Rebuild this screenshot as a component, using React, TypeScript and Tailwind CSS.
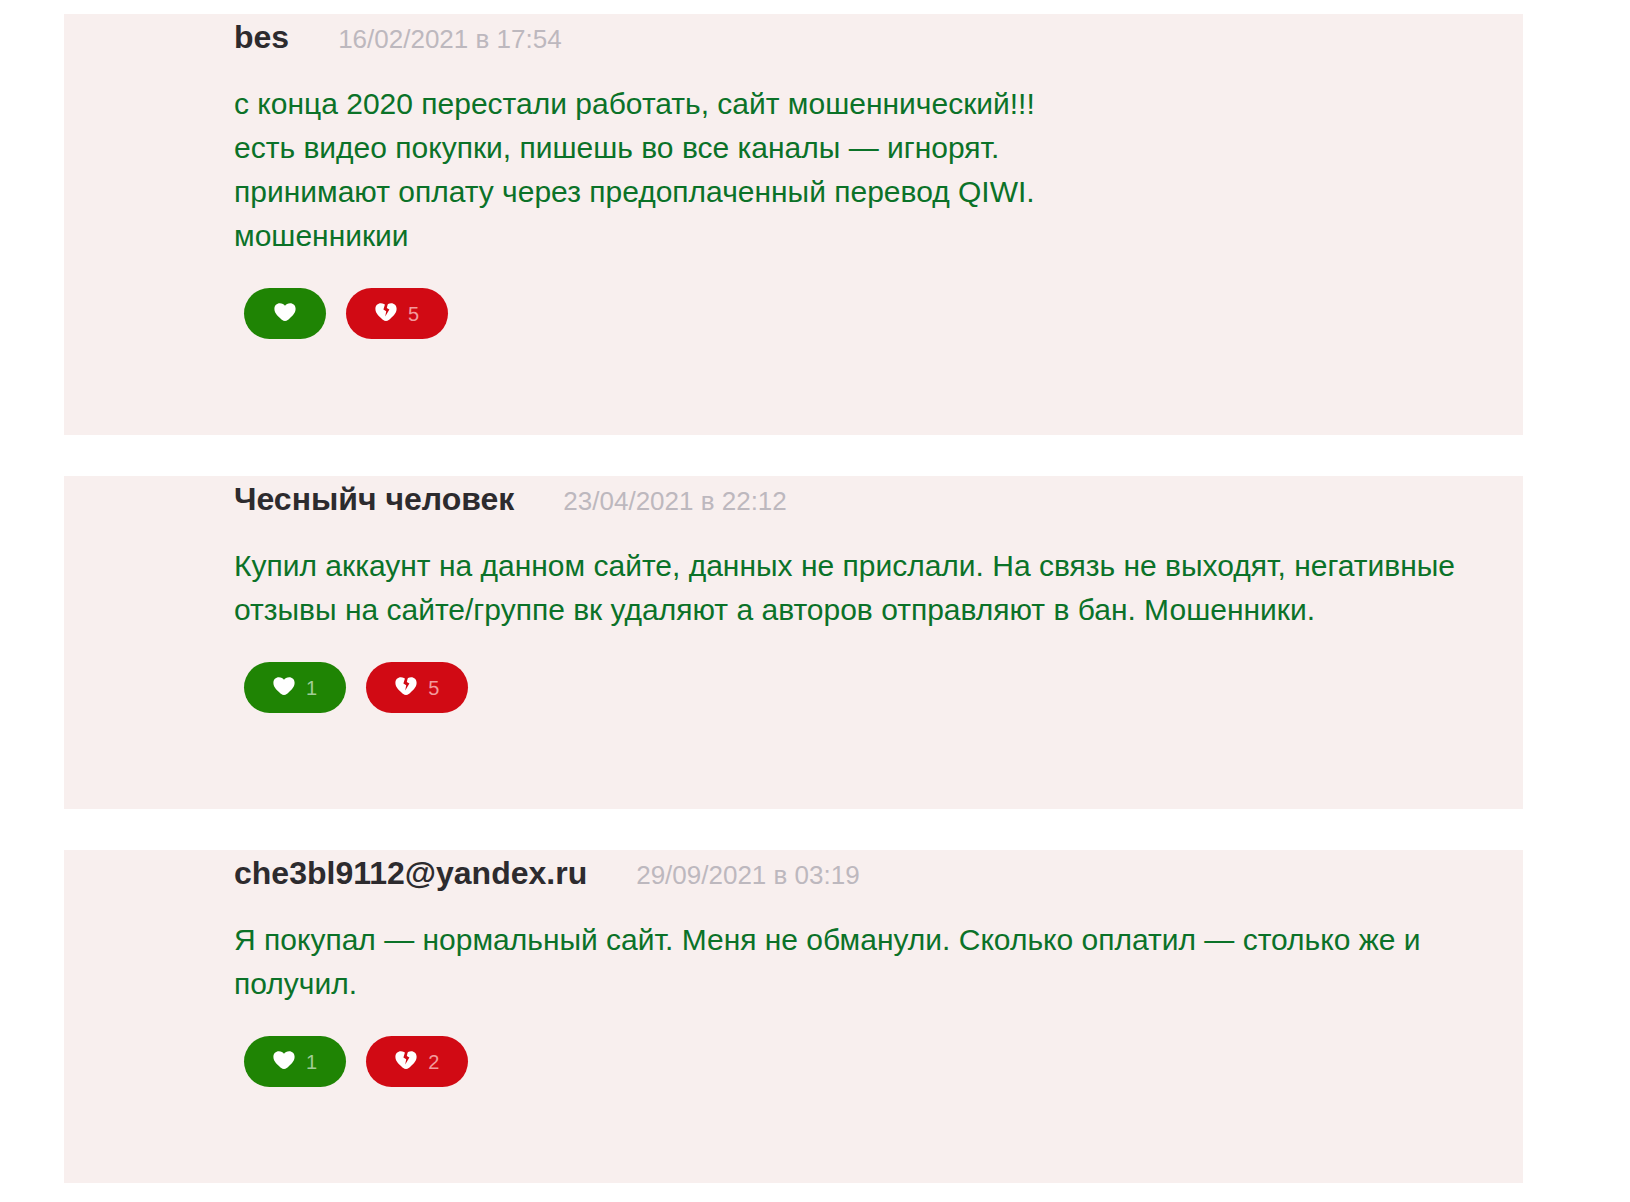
const HEART =
  'M11 18 C8.8 18 7.6 16.6 6 15 C3 12.4 0.4 9.6 0.4 5.8 C0.4 2.4 2.8 0.2 5.8 0.2 C8.2 0.2 10 1.3 11 2.8 C12 1.3 13.8 0.2 16.2 0.2 C19.2 0.2 21.6 2.4 21.6 5.8 C21.6 9.6 19 12.4 16 15 C14.4 16.6 13.2 18 11 18 Z';

function Heart({ broken }: { broken?: boolean }) {
  return (
    <svg viewBox="0 0 22 18" className="mb-[3px] h-[18px] w-[22px] shrink-0" aria-hidden="true">
      <path d={HEART} fill="#fff" />
      {broken && <path d="M10.4 0 L13 0 L11.8 5 L14.4 6.4 L10.2 13.6 L11.2 8.2 L8.4 6.6 Z" fill="#d10a14" />}
    </svg>
  );
}

type Comment = { name: string; date: string; lines: string[]; likes?: number; dislikes: number };

const comments: Comment[] = [
  {
    name: 'bes',
    date: '16/02/2021 в 17:54',
    lines: [
      'с конца 2020 перестали работать, сайт мошеннический!!!',
      'есть видео покупки, пишешь во все каналы — игнорят.',
      'принимают оплату через предоплаченный перевод QIWI.',
      'мошенникии',
    ],
    dislikes: 5,
  },
  {
    name: 'Чесныйч человек',
    date: '23/04/2021 в 22:12',
    lines: [
      'Купил аккаунт на данном сайте, данных не прислали. На связь не выходят, негативные отзывы на сайте/группе вк удаляют а авторов отправляют в бан. Мошенники.',
    ],
    likes: 1,
    dislikes: 5,
  },
  {
    name: 'che3bl9112@yandex.ru',
    date: '29/09/2021 в 03:19',
    lines: ['Я покупал — нормальный сайт. Меня не обманули. Сколько оплатил — столько же и получил.'],
    likes: 1,
    dislikes: 2,
  },
];

export default function App() {
  return (
    <main className="flex flex-col gap-[41px] bg-white pt-[14px] pr-[107px] pb-[18px] pl-16 font-['Liberation_Sans',Arial,sans-serif]">
      {comments.map((c) => (
        <article key={c.name} className="bg-[#f8efee] pt-[3px] pr-12 pb-24 pl-[170px]">
          <header className="flex items-baseline gap-[49px] leading-10">
            <h2 className="text-[32px] leading-10 font-bold text-[#2d2b2e]">{c.name}</h2>
            <time className="text-[26px] text-[#bdb8be]">{c.date}</time>
          </header>
          <div className="mt-[23px] text-[30px] leading-[44px] text-[#0b7228]">
            {c.lines.map((line) => (
              <p key={line}>{line}</p>
            ))}
          </div>
          <div className="mt-[30px] ml-[10px] flex gap-5">
            <button aria-label="Нравится" className="flex h-[51px] min-w-[82px] items-center justify-center gap-[11px] rounded-full bg-[#1f8404] px-[29px] text-xl text-[#a0cc98]">
              <Heart />
              {c.likes}
            </button>
            <button aria-label="Не нравится" className="flex h-[51px] min-w-[82px] items-center justify-center gap-[11px] rounded-full bg-[#d10a14] px-[29px] text-xl text-[#f29a9c]">
              <Heart broken />
              {c.dislikes}
            </button>
          </div>
        </article>
      ))}
    </main>
  );
}
